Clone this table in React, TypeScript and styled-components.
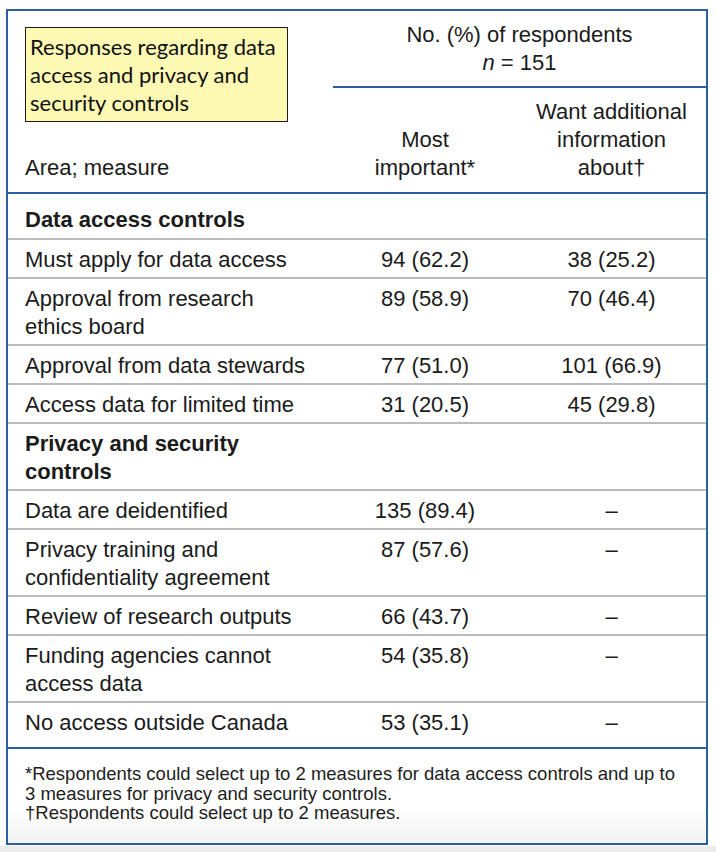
import React from "react";
import styled, { createGlobalStyle } from "styled-components";

const Global = createGlobalStyle`
  html, body { margin: 0; padding: 0; }
  body {
    background: #ececec;
    font-family: "Liberation Sans", Arial, Helvetica, sans-serif;
    color: #1b1b1b;
  }
`;

const BLUE = "#2a609f";
const GRAY = "#bcbcbc";

const Page = styled.div`
  background: #ffffff;
  padding: 9px 8px 0 6px;
  height: 837px;
`;

const Frame = styled.div`
  width: 702px;
  box-sizing: border-box;
  border: 2px solid ${BLUE};
  border-bottom: none;
  font-size: 22px;
  line-height: 28px;
`;

const Grid = styled.div`
  display: grid;
  grid-template-columns: 325px 184px 189px;
`;

const Header = styled(Grid)`
  grid-template-rows: auto auto;
  border-bottom: 2px solid ${BLUE};
`;

const AreaCell = styled.div`
  grid-row: 1 / 3;
  display: flex;
  flex-direction: column;
  justify-content: space-between;
  padding: 16px 0 10px 17px;
`;

const Callout = styled.div`
  width: 263px;
  height: 95px;
  box-sizing: border-box;
  background: #fefab4;
  border: 1.5px solid #1a1a1a;
  padding: 5px 0 0 4px;
  font-family: Lato, "Open Sans", sans-serif;
  font-size: 22px;
  line-height: 28px;
  color: #111;
`;

const SpanHead = styled.div`
  grid-column: 2 / 4;
  text-align: center;
  padding: 10px 0 9px;
  border-bottom: 2px solid ${BLUE};
`;

const ColHead = styled.div`
  align-self: end;
  text-align: center;
  padding: 10px 0 10px;
`;

const Row = styled(Grid)<{ $first?: boolean; $last?: boolean }>`
  border-top: ${(p) => (p.$first ? "none" : `2px solid ${GRAY}`)};
  padding: ${(p) => (p.$first ? "12px 0 4px" : p.$last ? "6px 0 10px" : "6px 0 3px")};
`;

const Label = styled.div<{ $bold?: boolean }>`
  padding-left: 17px;
  padding-right: 8px;
  white-space: pre-line;
  font-weight: ${(p) => (p.$bold ? 700 : 400)};
`;

const Num = styled.div`
  text-align: center;
`;

const Footer = styled.div`
  width: 702px;
  box-sizing: border-box;
  border: 2px solid ${BLUE};
  padding: 15px 8px 20px 17px;
  background: linear-gradient(#ffffff 60%, #f3f3f3);
  font-size: 18.5px;
  line-height: 19.5px;
  color: #1d1d1d;
`;

type R = { label: string; a?: string; b?: string; bold?: boolean };

const rows: R[] = [
  { label: "Data access controls", bold: true },
  { label: "Must apply for data access", a: "94 (62.2)", b: "38 (25.2)" },
  { label: "Approval from research\nethics board", a: "89 (58.9)", b: "70 (46.4)" },
  { label: "Approval from data stewards", a: "77 (51.0)", b: "101 (66.9)" },
  { label: "Access data for limited time", a: "31 (20.5)", b: "45 (29.8)" },
  { label: "Privacy and security\ncontrols", bold: true },
  { label: "Data are deidentified", a: "135 (89.4)", b: "–" },
  { label: "Privacy training and\nconfidentiality agreement", a: "87 (57.6)", b: "–" },
  { label: "Review of research outputs", a: "66 (43.7)", b: "–" },
  { label: "Funding agencies cannot\naccess data", a: "54 (35.8)", b: "–" },
  { label: "No access outside Canada", a: "53 (35.1)", b: "–" },
];

export default function App() {
  return (
    <>
      <Global />
      <Page>
        <Frame>
          <Header>
            <AreaCell>
              <Callout>
                Responses regarding data
                <br />
                access and privacy and
                <br />
                security controls
              </Callout>
              <div>Area; measure</div>
            </AreaCell>
            <SpanHead>
              No. (%) of respondents
              <br />
              <i>n</i> = 151
            </SpanHead>
            <ColHead>
              Most
              <br />
              important*
            </ColHead>
            <ColHead>
              Want additional
              <br />
              information
              <br />
              about†
            </ColHead>
          </Header>
          {rows.map((r, i) => (
            <Row key={i} $first={i === 0} $last={i === rows.length - 1}>
              <Label $bold={r.bold}>{r.label}</Label>
              <Num>{r.a}</Num>
              <Num>{r.b}</Num>
            </Row>
          ))}
        </Frame>
        <Footer>
          *Respondents could select up to 2 measures for data access controls and up to
          <br />
          3 measures for privacy and security controls.
          <br />
          †Respondents could select up to 2 measures.
        </Footer>
      </Page>
    </>
  );
}
